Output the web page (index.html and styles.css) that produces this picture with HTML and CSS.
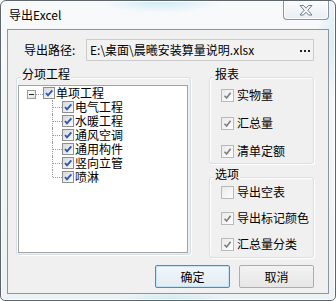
FILE: index.html
```html
<!DOCTYPE html>
<html lang="zh-CN">
<head>
<meta charset="utf-8">
<title>导出Excel</title>
<link rel="stylesheet" href="styles.css">
</head>
<body>
<div class="window">
  <div class="titlebar">
    <span class="title">导出Excel</span>
    <div class="close-btn">
      <svg width="14" height="11" viewBox="0 0 14 11"><polygon points="1,0.5 4.5,0.5 7,3.2 9.5,0.5 13,0.5 8.8,5.2 13,10 9.5,10 7,7.2 4.5,10 1,10 5.2,5.2" fill="#f7f8fa" stroke="#6f7d8c" stroke-width="1" stroke-linejoin="round"/></svg>
    </div>
  </div>
  <div class="client">
    <div class="path-row">
      <span class="path-label">导出路径:</span>
      <div class="path-field">
        <span class="path-text">E:\桌面\晨曦安装算量说明.xlsx</span>
        <svg class="browse" width="10" height="2" viewBox="0 0 10 2"><rect x="0" y="0" width="2" height="2" fill="#222"/><rect x="4" y="0" width="2" height="2" fill="#222"/><rect x="8" y="0" width="2" height="2" fill="#222"/></svg>
      </div>
    </div>
    <div class="main">
      <div class="group group-tree">
        <span class="group-label">分项工程</span>
        <div class="tree">
          <div class="tree-root">
            <span class="expander"></span>
            <span class="root-dots"></span>
            <span class="tcb"><svg width="10" height="10" viewBox="0 0 10 10"><path d="M2 5 L4 7.3 L8.3 2.3" fill="none" stroke="#2d56b8" stroke-width="1.9"/></svg></span>
            <span class="tree-text">单项工程</span>
          </div>
          <div class="tree-item"><span class="tcb"><svg width="10" height="10" viewBox="0 0 10 10"><path d="M2 5 L4 7.3 L8.3 2.3" fill="none" stroke="#2d56b8" stroke-width="1.9"/></svg></span><span class="tree-text">电气工程</span></div>
          <div class="tree-item"><span class="tcb"><svg width="10" height="10" viewBox="0 0 10 10"><path d="M2 5 L4 7.3 L8.3 2.3" fill="none" stroke="#2d56b8" stroke-width="1.9"/></svg></span><span class="tree-text">水暖工程</span></div>
          <div class="tree-item"><span class="tcb"><svg width="10" height="10" viewBox="0 0 10 10"><path d="M2 5 L4 7.3 L8.3 2.3" fill="none" stroke="#2d56b8" stroke-width="1.9"/></svg></span><span class="tree-text">通风空调</span></div>
          <div class="tree-item"><span class="tcb"><svg width="10" height="10" viewBox="0 0 10 10"><path d="M2 5 L4 7.3 L8.3 2.3" fill="none" stroke="#2d56b8" stroke-width="1.9"/></svg></span><span class="tree-text">通用构件</span></div>
          <div class="tree-item"><span class="tcb"><svg width="10" height="10" viewBox="0 0 10 10"><path d="M2 5 L4 7.3 L8.3 2.3" fill="none" stroke="#2d56b8" stroke-width="1.9"/></svg></span><span class="tree-text">竖向立管</span></div>
          <div class="tree-item last"><span class="tcb"><svg width="10" height="10" viewBox="0 0 10 10"><path d="M2 5 L4 7.3 L8.3 2.3" fill="none" stroke="#2d56b8" stroke-width="1.9"/></svg></span><span class="tree-text">喷淋</span></div>
        </div>
      </div>
      <div class="side">
        <div class="group group-report">
          <span class="group-label">报表</span>
          <div class="check-item"><span class="cb"><svg width="11" height="11" viewBox="0 0 11 11"><path d="M2.5 5.8 L4.6 8 L8.6 2.8" fill="none" stroke="#7d7d7d" stroke-width="1.6"/></svg></span><span>实物量</span></div>
          <div class="check-item"><span class="cb"><svg width="11" height="11" viewBox="0 0 11 11"><path d="M2.5 5.8 L4.6 8 L8.6 2.8" fill="none" stroke="#7d7d7d" stroke-width="1.6"/></svg></span><span>汇总量</span></div>
          <div class="check-item"><span class="cb"><svg width="11" height="11" viewBox="0 0 11 11"><path d="M2.5 5.8 L4.6 8 L8.6 2.8" fill="none" stroke="#7d7d7d" stroke-width="1.6"/></svg></span><span>清单定额</span></div>
        </div>
        <div class="group group-options">
          <span class="group-label">选项</span>
          <div class="check-item"><span class="cb"></span><span>导出空表</span></div>
          <div class="check-item"><span class="cb"><svg width="11" height="11" viewBox="0 0 11 11"><path d="M2.5 5.8 L4.6 8 L8.6 2.8" fill="none" stroke="#7d7d7d" stroke-width="1.6"/></svg></span><span>导出标记颜色</span></div>
          <div class="check-item"><span class="cb"><svg width="11" height="11" viewBox="0 0 11 11"><path d="M2.5 5.8 L4.6 8 L8.6 2.8" fill="none" stroke="#7d7d7d" stroke-width="1.6"/></svg></span><span>汇总量分类</span></div>
        </div>
      </div>
    </div>
    <div class="buttons">
      <button class="btn btn-default">确定</button>
      <button class="btn">取消</button>
    </div>
  </div>
</div>
</body>
</html>
```
FILE: styles.css
```css
* { box-sizing: border-box; }
html, body { margin: 0; padding: 0; }
body {
  width: 336px;
  height: 301px;
  overflow: hidden;
  background: #ffffff;
  font-family: "Noto Sans CJK SC", "Microsoft YaHei", sans-serif;
  font-size: 12px;
  color: #000;
}

.window {
  width: 336px;
  height: 301px;
  border: 1px solid #5d6670;
  border-radius: 6px 6px 5px 5px;
  background:
    radial-gradient(ellipse 60px 12px at 160px 0px, rgba(150, 220, 240, 0.45), transparent),
    radial-gradient(ellipse 20px 60px at 336px 40px, rgba(150, 210, 235, 0.35), transparent),
    radial-gradient(ellipse 60px 10px at 170px 301px, rgba(150, 225, 235, 0.5), transparent),
    linear-gradient(#f7f9fb, #eef2f5);
  box-shadow: inset 0 0 0 1px rgba(255, 255, 255, 0.9);
  display: flex;
  flex-direction: column;
}

.titlebar {
  height: 28px;
  display: flex;
  justify-content: space-between;
  align-items: flex-start;
  padding-left: 8px;
  padding-right: 6px;
}
.title {
  line-height: 27px;
  font-size: 12px;
}
.close-btn {
  width: 46px;
  height: 19px;
  border: 1px solid #8795a4;
  border-top: none;
  border-radius: 0 0 4px 4px;
  background: linear-gradient(#fbfcfd, #e9eef3);
  box-shadow: inset 0 0 0 1px rgba(255, 255, 255, 0.8);
  display: flex;
  align-items: center;
  justify-content: center;
}

.client {
  margin: 0 6px 6px;
  height: 265px;
  border: 1px solid #8d949b;
  background: #f0f0f0;
  display: flex;
  flex-direction: column;
}

.path-row {
  display: flex;
  align-items: center;
  margin-top: 9px;
  padding-left: 16px;
  height: 22px;
}
.path-label {
  width: 62px;
  line-height: 14px;
}
.path-field {
  width: 228px;
  height: 22px;
  border: 1px solid #cbcbcb;
  background: #f2f2f2;
  display: flex;
  align-items: center;
  justify-content: space-between;
  padding: 0 3px 0 3px;
}
.path-text { line-height: 14px; }
.browse { margin-top: 1px; }

.main {
  display: flex;
  align-items: flex-start;
  margin-top: 16px;
  padding-left: 8px;
}

.group {
  position: relative;
  border: 1px solid #d5dfe5;
  border-radius: 3px;
  box-shadow: inset 1px 1px 0 #ffffff, 1px 1px 0 #ffffff;
}
.group-label {
  position: absolute;
  top: -11px;
  left: 4px;
  padding: 0 1px;
  line-height: 14px;
  background: #f0f0f0;
}

.group-tree {
  width: 175px;
  height: 178px;
  padding: 7px 2px 1px 1px;
}
.tree {
  height: 100%;
  background: #ffffff;
  border: 1px solid #a3a3a3;
}

.tree-root {
  height: 14px;
  display: flex;
  align-items: center;
  padding-left: 8px;
}
.expander {
  position: relative;
  width: 9px;
  height: 9px;
  border: 1px solid #9a9a9a;
  background: linear-gradient(135deg, #ffffff, #e2e2e2);
  margin-top: 2px;
}
.expander::after {
  content: "";
  position: absolute;
  left: 1px;
  top: 3px;
  width: 5px;
  height: 1px;
  background: #222;
}
.root-dots {
  width: 7px;
  border-top: 1px dotted #999;
  margin-top: 2px;
}
.tcb {
  width: 12px;
  height: 12px;
  border: 1px solid #8f8f8f;
  background: linear-gradient(135deg, #d8d8d8, #fbfbfb);
  display: flex;
  align-items: center;
  justify-content: center;
  flex: none;
}
.tree-text {
  margin-left: 1px;
  line-height: 14px;
}
.tree-item {
  position: relative;
  height: 14px;
  display: flex;
  align-items: center;
  padding-left: 43px;
}
.tree-item::before {
  content: "";
  position: absolute;
  left: 33px;
  top: 0;
  bottom: 0;
  border-left: 1px dotted #999;
}
.tree-item.last::before { bottom: 50%; }
.tree-item::after {
  content: "";
  position: absolute;
  left: 34px;
  top: 50%;
  width: 9px;
  border-top: 1px dotted #999;
}

.side {
  margin-left: 18px;
  width: 105px;
  display: flex;
  flex-direction: column;
}
.group-report {
  height: 87px;
  padding: 9px 0 0 11px;
  display: flex;
  flex-direction: column;
  gap: 12px;
}
.group-options {
  margin-top: 13px;
  height: 81px;
  padding: 6px 0 0 11px;
  display: flex;
  flex-direction: column;
  gap: 10px;
}
.check-item {
  display: flex;
  align-items: center;
  height: 16px;
  gap: 3px;
  line-height: 14px;
  white-space: nowrap;
}
.cb {
  width: 13px;
  height: 13px;
  border: 1px solid #b9b9b9;
  background: linear-gradient(135deg, #e9e9e9, #ffffff);
  display: flex;
  align-items: center;
  justify-content: center;
  flex: none;
}

.buttons {
  display: flex;
  justify-content: flex-end;
  gap: 9px;
  margin-top: 7px;
  padding-right: 14px;
}
.btn {
  width: 75px;
  height: 23px;
  padding: 0;
  border: 1px solid #adadad;
  border-radius: 2px;
  background: linear-gradient(#f3f3f3, #e6e6e6);
  font-family: inherit;
  font-size: 12px;
  color: #000;
  display: flex;
  align-items: center;
  justify-content: center;
  line-height: 14px;
}
.btn-default {
  border-color: #3d8ed4;
  box-shadow: inset 0 0 0 1px #c5e4f8;
  background: linear-gradient(#f1f6fa, #e3ecf3);
}
```
